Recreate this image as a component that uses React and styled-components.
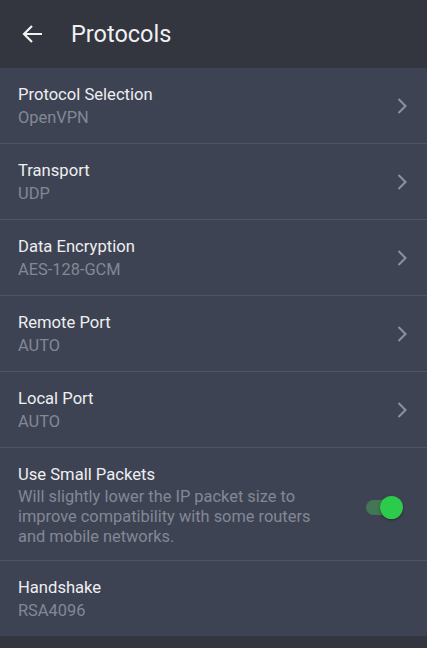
import React from "react";
import styled, { createGlobalStyle } from "styled-components";

const Global = createGlobalStyle`
  html, body { margin: 0; padding: 0; background: #33353f; }
  body { font-family: Roboto, "Noto Sans", sans-serif; -webkit-font-smoothing: antialiased; }
`;

const Page = styled.div`
  width: 427px;
  height: 648px;
  background: #33353f;
  display: flex;
  flex-direction: column;
  overflow: hidden;
`;

const Header = styled.header`
  height: 68px;
  display: flex;
  align-items: center;
  padding-left: 22px;
  gap: 28px;
  flex-shrink: 0;
`;

const BackButton = styled.button`
  background: none;
  border: 0;
  padding: 0;
  width: 21px;
  height: 20px;
  display: flex;
  align-items: center;
  justify-content: center;
  cursor: pointer;
`;

const Title = styled.h1`
  margin: 0;
  font-size: 23.5px;
  font-weight: 400;
  color: #f0f0f2;
`;

const List = styled.ul`
  list-style: none;
  margin: 0;
  padding: 0;
  background: #3e4353;
`;

const Row = styled.li`
  display: flex;
  align-items: center;
  padding: ${(p) => (p.$tall ? "16px 24px 13px 18px" : "16px 18px 13px 18px")};
  border-bottom: ${(p) => (p.$last ? "none" : "1px solid #4e5464")};
  gap: 12px;
`;

const TextCol = styled.div`
  flex: 1;
  display: flex;
  flex-direction: column;
  min-width: 0;
`;

const RowTitle = styled.span`
  font-size: 16.6px;
  line-height: 22px;
  color: #eeeff1;
`;

const RowValue = styled.span`
  font-size: 16.4px;
  line-height: 24px;
  color: #838895;
`;

const RowDesc = styled.span`
  font-size: 16.4px;
  line-height: 20px;
  color: #838895;
  margin-top: 1px;
  max-width: 310px;
`;

const Chevron = styled.svg`
  width: 14px;
  height: 18px;
  flex-shrink: 0;
  margin-top: -2px;
`;

const Switch = styled.div`
  position: relative;
  width: 37px;
  height: 23px;
  flex-shrink: 0;
  margin-top: 3px;
`;

const Track = styled.div`
  position: absolute;
  left: 0;
  top: 4px;
  width: 31px;
  height: 15px;
  border-radius: 8px;
  background: #437654;
`;

const Thumb = styled.div`
  position: absolute;
  right: 0;
  top: 0;
  width: 23px;
  height: 23px;
  border-radius: 50%;
  background: #2dcb4b;
  box-shadow: 0 1px 3px rgba(0, 0, 0, 0.35);
`;

const rows = [
  { title: "Protocol Selection", value: "OpenVPN" },
  { title: "Transport", value: "UDP" },
  { title: "Data Encryption", value: "AES-128-GCM" },
  { title: "Remote Port", value: "AUTO" },
  { title: "Local Port", value: "AUTO" },
];

function ChevronIcon() {
  return (
    <Chevron viewBox="0 0 14 18">
      <path d="M3.5 2 L10.5 9 L3.5 16" fill="none" stroke="#8d92a0" strokeWidth="2" />
    </Chevron>
  );
}

export default function App() {
  return (
    <Page>
      <Global />
      <Header>
        <BackButton aria-label="Back">
          <svg width="21" height="20" viewBox="0 0 21 20">
            <path d="M20 10 H2 M10 2 L2 10 L10 18" fill="none" stroke="#f2f2f2" strokeWidth="2.2" />
          </svg>
        </BackButton>
        <Title>Protocols</Title>
      </Header>
      <List>
        {rows.map((r) => (
          <Row key={r.title}>
            <TextCol>
              <RowTitle>{r.title}</RowTitle>
              <RowValue>{r.value}</RowValue>
            </TextCol>
            <ChevronIcon />
          </Row>
        ))}
        <Row $tall>
          <TextCol>
            <RowTitle>Use Small Packets</RowTitle>
            <RowDesc>
              Will slightly lower the IP packet size to improve compatibility with some routers and mobile networks.
            </RowDesc>
          </TextCol>
          <Switch>
            <Track />
            <Thumb />
          </Switch>
        </Row>
        <Row $last>
          <TextCol>
            <RowTitle>Handshake</RowTitle>
            <RowValue>RSA4096</RowValue>
          </TextCol>
        </Row>
      </List>
    </Page>
  );
}
